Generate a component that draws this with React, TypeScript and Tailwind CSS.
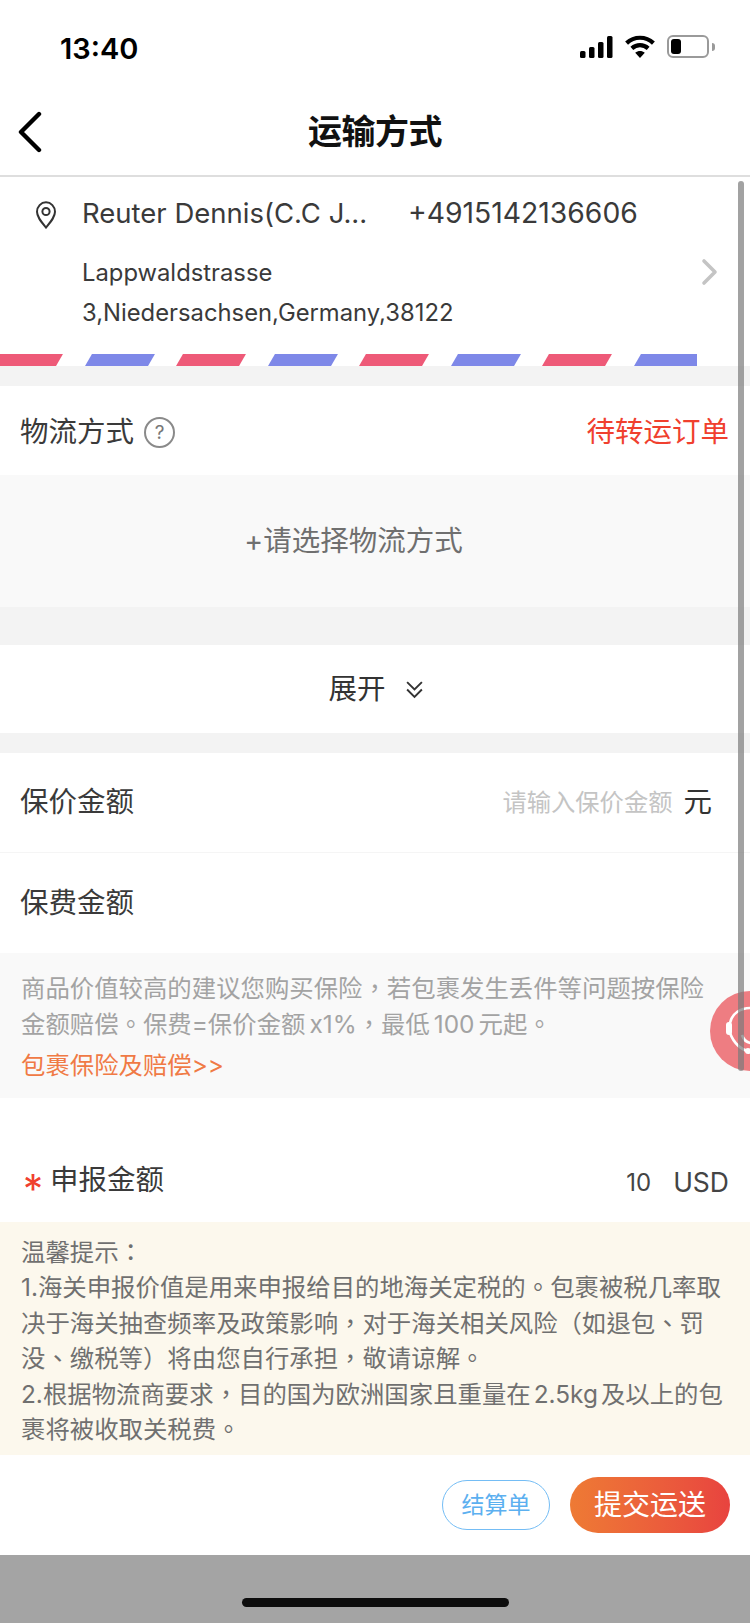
const FONT = "font-['Inter','Noto_Sans_CJK_SC',sans-serif]"
// the note blocks use centred punctuation, which the TC cut has
const NOTE_FONT = "font-['Inter','Noto_Sans_CJK_TC',sans-serif]"

const STRIPES = ['bg-[#ee5a78]', 'bg-[#7e88e8]', 'bg-[#ee5a78]', 'bg-[#7e88e8]', 'bg-[#ee5a78]', 'bg-[#7e88e8]', 'bg-[#ee5a78]', 'bg-[#7e88e8]']

function StatusBar() {
  return (
    <div className="flex h-[96px] items-start justify-between pl-[60px] pr-[35px] pt-[32px]">
      <span className="text-[29px] leading-[34px] font-semibold text-black">13:40</span>
      <div className="flex items-center gap-[11px] pt-[3px]">
        <svg width="33" height="22" viewBox="0 0 33 22" fill="#000">
          <rect x="0" y="15" width="5.5" height="7" rx="1.5" />
          <rect x="9" y="11" width="5.5" height="11" rx="1.5" />
          <rect x="18" y="6" width="5.5" height="16" rx="1.5" />
          <rect x="27" y="0" width="5.5" height="22" rx="1.5" />
        </svg>
        <svg width="32" height="23" viewBox="0 0 32 24" fill="none" stroke="#000" strokeWidth="4.4">
          <path d="M2 8.5C10 1 22 1 30 8.5" />
          <path d="M7.5 14C12.5 9.5 19.5 9.5 24.5 14" />
          <path d="M16 24l-5-5.5c3-2.3 7-2.3 10 0z" fill="#000" stroke="none" />
        </svg>
        <div className="flex items-center gap-[3px]">
          <div className="h-[23px] w-[42px] rounded-[6px] border-2 border-[#9a9a9a] p-[2px]">
            <div className="h-full w-[10px] rounded-[3px] bg-black" />
          </div>
          <div className="h-[8px] w-[3px] rounded-r-sm bg-[#9a9a9a]" />
        </div>
      </div>
    </div>
  )
}

function NavBar() {
  return (
    <div className="relative flex h-[81px] items-center justify-center border-b-2 border-[#dedede] pb-[8px]">
      <svg className="absolute left-[17px] top-[15px]" width="26" height="42" viewBox="0 0 26 42" fill="none" stroke="#000" strokeWidth="4.4" strokeLinecap="round" strokeLinejoin="round">
        <path d="M22 3L4 21l18 18" />
      </svg>
      <span className="text-[34px] leading-[44px] font-bold tracking-[-0.5px] text-[#111]">运输方式</span>
    </div>
  )
}

function AddressCard() {
  return (
    <div className="relative bg-white">
      <div className="flex h-[177px] flex-col pl-[82px] pr-[30px] text-[#3a3a3a]">
        <div className="flex h-[72px] items-center">
          <span className="w-[326px] text-[27.5px] leading-[36px]">Reuter Dennis(C.C J...</span>
          <span className="text-[28.3px] leading-[36px]">+4915142136606</span>
        </div>
        <div className="mt-[4px] text-[23.8px] leading-[40px]">Lappwaldstrasse</div>
        <div className="text-[23.8px] leading-[40px]">3,Niedersachsen,Germany,38122</div>
      </div>
      <svg className="absolute left-[34px] top-[24px]" width="24" height="28" viewBox="0 0 24 28" fill="none" stroke="#333" strokeWidth="2">
        <path d="M12 26.5C7 20.5 3 16 3 10.8a9 9.5 0 0 1 18 0C21 16 17 20.5 12 26.5z" />
        <circle cx="12" cy="10.5" r="3.6" />
      </svg>
      <svg className="absolute left-[700px] top-[81px]" width="18" height="28" viewBox="0 0 18 28" fill="none" stroke="#c4c4c4" strokeWidth="3.6" strokeLinecap="round" strokeLinejoin="round">
        <path d="M4 3l11 11L4 25" />
      </svg>
      <div className="flex h-[12px] w-[697px] gap-[28.5px] overflow-hidden">
        {STRIPES.map((color, i) => (
          <div key={i} className={`h-full w-[63px] shrink-0 -translate-x-[3.5px] -skew-x-[30deg] ${color}`} />
        ))}
      </div>
    </div>
  )
}

function Row({ children, className = '' }: { children: React.ReactNode; className?: string }) {
  return <div className={`flex items-center justify-between pl-[20px] pr-[21px] ${className}`}>{children}</div>
}

export default function App() {
  return (
    <div className={`${FONT} relative h-[1623px] w-[750px] overflow-hidden bg-white`}>
      <StatusBar />
      <NavBar />
      <AddressCard />
      <div className="h-[20px] bg-[#f3f3f3]" />

      <Row className="h-[89px] pt-[3px] text-[28.5px] text-[#3a3a3a]">
        <div className="flex items-center gap-[10px]">
          <span>物流方式</span>
          <span className="flex h-[31px] w-[31px] items-center justify-center rounded-full border-2 border-[#8a8a8a] text-[19px] leading-none text-[#777]">?</span>
        </div>
        <span className="text-[#f0402e]">待转运订单</span>
      </Row>
      <div className="flex h-[132px] items-center justify-center bg-[#f9f9f9] pr-[43px] text-[28.5px] text-[#6f6f6f]">+请选择物流方式</div>
      <div className="h-[38px] bg-[#f3f3f3]" />
      <div className="flex h-[88px] items-center justify-center gap-[19px] pl-[2px] text-[28.5px] text-[#333]">
        <span>展开</span>
        <svg width="19" height="19" viewBox="0 0 18 18" fill="none" stroke="#333" strokeWidth="1.8">
          <path d="M2 2l7 7 7-7" />
          <path d="M2 9l7 7 7-7" />
        </svg>
      </div>
      <div className="h-[20px] bg-[#f3f3f3]" />

      <Row className="h-[100px] border-b border-[#f5f5f5] pr-[38px] text-[28.5px] text-[#3a3a3a]">
        <span>保价金额</span>
        <div className="flex items-center gap-[11px]">
          <span className="text-[24.3px] text-[#c4c4c4]">请输入保价金额</span>
          <span className="text-[#333]">元</span>
        </div>
      </Row>
      <Row className="h-[100px] text-[28.5px] text-[#3a3a3a]">
        <span>保费金额</span>
      </Row>
      <div className={`${NOTE_FONT} h-[145px] bg-[#f9f9f9] pl-[21px] pr-[30px] pt-[17px] text-[24.4px] leading-[36px] text-[#a3a3a3]`}>
        <p>
          商品价值较高的建议您购买保险，若包裹发生丢件等问题按保险金额赔偿。保费=保价金额<span className="pl-[4px]">x1%</span>，最低<span className="px-[4px]">100</span>元起。
        </p>
        <p className="mt-[5px] text-[#f07a45]">包裹保险及赔偿&gt;&gt;</p>
      </div>

      <Row className="h-[124px] items-end pb-[19px] text-[28.5px] text-[#3a3a3a]">
        <div className="flex items-center gap-[7px] pl-[3px]">
          <span className="mt-[18px] h-[28px] text-[40px] leading-[28px] text-[#f0402e]">*</span>
          <span>申报金额</span>
        </div>
        <div className="flex items-center gap-[22px]">
          <span className="text-[24px] text-[#444]">10</span>
          <span className="text-[26.5px] text-[#444]">USD</span>
        </div>
      </Row>
      <div className={`${NOTE_FONT} h-[233px] bg-[#fcf8ed] pl-[21px] pr-[20px] pt-[13px] text-[24.4px] leading-[35.4px] text-[#707070]`}>
        <p>温馨提示：</p>
        <p>1.海关申报价值是用来申报给目的地海关定税的。包裹被税几率取决于海关抽查频率及政策影响，对于海关相关风险（如退包、罚没、缴税等）将由您自行承担，敬请谅解。</p>
        <p>
          2.根据物流商要求，目的国为欧洲国家且重量在<span className="px-[3px]">2.5kg</span>及以上的包裹将被收取关税费。
        </p>
      </div>

      <div className="flex h-[100px] items-center justify-end gap-[20px] pl-[1px] pr-[20px]">
        <div className="flex h-[50px] w-[108px] items-center justify-center rounded-[25px] border border-[#74bdf5] text-[23px] text-[#5cb0f0]">结算单</div>
        <div className="flex h-[56px] w-[160px] items-center justify-center rounded-[28px] bg-gradient-to-r from-[#ee7a34] to-[#e8433f] text-[28px] text-white">提交运送</div>
      </div>
      <div className="flex h-[68px] items-start justify-center bg-[#a4a4a4] pt-[43px]">
        <div className="h-[9px] w-[267px] rounded-full bg-[#0d0d0d]" />
      </div>

      {/* scrollbar and floating chat button sit over the page */}
      <div className="absolute left-[710px] top-[991px] h-[80px] w-[80px] rounded-full bg-[#ee7d82]">
        <svg className="absolute left-0 top-0" width="80" height="80" viewBox="0 0 80 80" fill="none" stroke="#fff" strokeWidth="2.6">
          <path d="M20 32C22 22 31 17 40 17" />
          <path d="M20 42C24 53 32 59 38 60" />
          <path d="M32 44C34 50 37 52 42 52" />
          <rect x="16" y="31" width="6" height="13" rx="3" fill="#fff" stroke="none" />
          <circle cx="38" cy="60" r="3" fill="#fff" stroke="none" />
        </svg>
      </div>
      <div className="absolute left-[738px] top-[181px] h-[890px] w-[6px] rounded-full bg-[#7a7a7a]/70" />
    </div>
  )
}
